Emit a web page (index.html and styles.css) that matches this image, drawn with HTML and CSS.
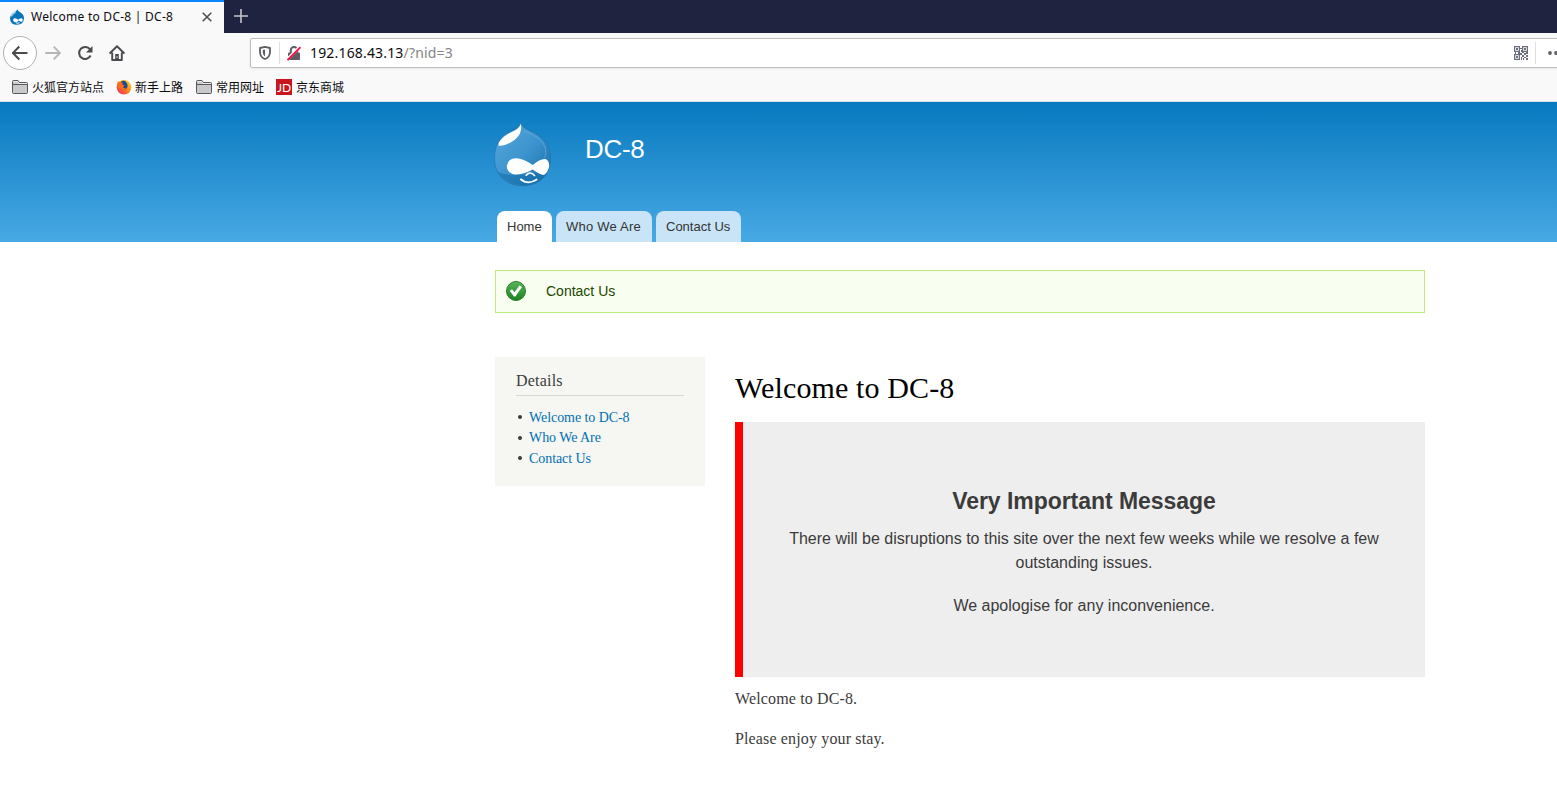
FILE: index.html
```html
<!DOCTYPE html>
<html lang="en">
<head>
<meta charset="utf-8">
<title>Welcome to DC-8 | DC-8</title>
<link rel="stylesheet" href="styles.css">
</head>
<body>
<svg width="0" height="0" class="defs">
  <defs>
    <linearGradient id="drop" x1="0" y1="0" x2="1" y2="1"><stop offset="0" stop-color="#5aa9dc"/><stop offset=".55" stop-color="#3a92cd"/><stop offset="1" stop-color="#12659f"/></linearGradient>
    <linearGradient id="green" x1="0" y1="0" x2="0" y2="1"><stop offset="0" stop-color="#58b558"/><stop offset="1" stop-color="#1c821f"/></linearGradient>
    <linearGradient id="fox" x1="1" y1="0" x2="0" y2="1"><stop offset="0" stop-color="#ffe226"/><stop offset=".45" stop-color="#ff8a16"/><stop offset="1" stop-color="#f5156c"/></linearGradient>
    <symbol id="folder" viewBox="0 0 16 14"><path d="M.5 12.5v-11q0-1 1-1H6l1.5 2h7q1 0 1 1v9q0 1-1 1h-13q-1 0-1-1z" fill="#c9c8cb" stroke="#58575b"/><path d="M1 4.5h14" stroke="#58575b"/><path d="M1.5 1.5h4L7 3.5h8" fill="none" stroke="#eee"/></symbol>
  </defs>
</svg>
<div class="tabstrip">
  <div class="tab">
    <svg class="favicon" width="16" height="16" viewBox="0 0 16 16"><path d="M8.2.3Q9 2.2 11.5 3.5 15 5.6 15 9.5 14.5 15.7 8 15.8 1.2 15.5 1 9.4 1.2 5.6 5 3.4 8 2 8.2.3z" fill="#0875b8"/><path d="M2.4 7.4Q3 4.5 6.6 3" fill="none" stroke="#a8d5ed" stroke-width="1.4"/><path d="M4.7 9.4q2.3-.7 4.4 1.4 2-2 4-1.4 1.3 1.2.2 3-1.3 1-3.4-1-2.7 2.5-4.7 1.7-2-1.8-.5-3.7z" fill="#fff"/><path d="M7 13.8q2 .9 3.6-.1" stroke="#fff" fill="none"/></svg>
    <span class="tab-title">Welcome to DC-8 | DC-8</span>
    <svg class="close" width="10" height="10" viewBox="0 0 10 10"><path d="M.7.7l8.6 8.6M9.3.7L.7 9.3" stroke="#4a4a4f" stroke-width="1.5"/></svg>
  </div>
  <svg class="plus" width="14" height="14" viewBox="0 0 14 14"><path d="M7 0v14M0 7h14" stroke="#c5c5cc" stroke-width="1.6"/></svg>
</div>
<div class="toolbar">
  <span class="back"><svg width="16" height="16" viewBox="0 0 16 16"><path d="M15.5 8H1.3M7.3 1.5L1 8l6.3 6.5" fill="none" stroke="#4a4a4f" stroke-width="2"/></svg></span>
  <svg class="forward" width="16" height="16" viewBox="0 0 16 16"><path d="M.3 8h14.2M8.7 1.7L15 8l-6.3 6.3" fill="none" stroke="#b5b5b7" stroke-width="1.9"/></svg>
  <svg class="reload" width="16" height="16" viewBox="0 0 16 16"><path d="M13 4.4A6 6 0 1 0 13.6 10.5" fill="none" stroke="#4a4a4f" stroke-width="2"/><path d="M15.5 1v6.5H9z" fill="#4a4a4f"/></svg>
  <svg class="home" width="16" height="16" viewBox="0 0 16 16"><path d="M.6 8.5L8 1.2l7.4 7.3M3.2 7.5V15h9.6V7.5" fill="none" stroke="#4a4a4f" stroke-width="1.9" stroke-linejoin="round"/><path d="M6.2 9h3.6v5.5H6.2z" fill="#4a4a4f"/><path d="M8 11v2" stroke="#ccc"/></svg>
  <div class="urlbar">
    <svg class="shield" width="12" height="14" viewBox="0 0 12 14"><path d="M6 .9l5 1.1v4.5Q10.5 11.5 6 13 1.5 11.5 1 6.5V2z" fill="none" stroke="#5c5c61" stroke-width="1.8" stroke-linejoin="round"/><path d="M6 3.5l-2.2.6v2.7Q4.2 9.6 6 10.5z" fill="#5c5c61"/></svg>
    <i class="sep"></i>
    <svg class="lock" width="14" height="15" viewBox="0 0 14 15"><path d="M3.8 7V4.3a3.2 3.2 0 0 1 6.4 0V7" fill="none" stroke="#5c5c61" stroke-width="2"/><rect x="1" y="6.5" width="12" height="7.5" rx="1" fill="#5c5c61"/><path d="M.5 13L12.9.9" stroke="#fff" stroke-width="3"/><path d="M.5 14L13.5 1.2" stroke="#f5114e" stroke-width="1.9"/></svg>
    <span class="url">192.168.43.13<span class="path">/?nid=3</span></span>
    <svg class="qr" width="14" height="14" viewBox="0 0 14 14"><g fill="none" stroke="#69707c" stroke-width="1.2"><path d="M.6.6h4.800v4.800H.6zM8.600.6h4.800v4.800H8.600zM.6 8.600h4.800v4.800H.6z"/></g><path d="M2 2h2v2H2zM10 2h2v2h-2zM2 10h2v2H2zM6 2h2v1H6zM7 4h1v2H7zM1 6h1v2H1zM4 6h2v2H4zM6 7h2v2H6zM8 6h2v1H8zM12 6h2v2h-2zM10 7h2v2h-2zM8 9h2v2H8zM12 9h2v2h-2zM10 11h2v1h-2zM7 11h1v3H7zM9 12h1v2H9zM12 12h2v2h-2z" fill="#69707c"/></svg>
    <i class="sep right"></i>
    <svg class="dots" width="10" height="4" viewBox="0 0 10 4"><circle cx="2" cy="2" r="1.9" fill="#616165"/><circle cx="8" cy="2" r="1.9" fill="#616165"/></svg>
  </div>
</div>
<div class="bookmarks">
  <span class="mark m1"><svg width="16" height="14"><use href="#folder"/></svg>火狐官方站点</span>
  <span class="mark m2"><svg width="16" height="16" viewBox="0 0 16 16"><circle cx="8" cy="8.3" r="7.3" fill="url(#fox)"/><path d="M5 2.7Q8 .8 10 3q2.500 3 1 6-2 2.500-4.500 2Q3.6 10 4 7q1.5-.8 1-4.3z" fill="#174c9c"/><path d="M1 7Q.8 3.5 3 1.8q.2 1.4 1 1.9 1.8-.6 3 .2-1 1-.6 1.8l2 .5Q8 7.7 6.800 8q.8 1.6 3.2.7-.3 2.5-3.5 2.2Q2.5 10 1 7z" fill="#ff6b1b"/></svg>新手上路</span>
  <span class="mark m3"><svg width="16" height="14"><use href="#folder"/></svg>常用网址</span>
  <span class="mark m4"><b class="jd">JD</b>京东商城</span>
</div>
<header class="header">
  <div class="brand">
    <svg class="logo" width="58" height="65" viewBox="0 0 58 65"><path d="M26.700.4C28 6 34 7.500 41 11.500 50 17 56.600 24 56.600 36 56.600 53 45 63.800 29 63.800 12 63.800.5 53 .5 36 .5 25 5 17 11 12.500 18 8.500 25.500 7 26.700.4z" fill="url(#drop)" stroke="#256fa4" stroke-width=".6"/><path d="M3 49Q9 54 29 53T56 43Q51 63 29 63.300 10 62 3 49z" fill="#176fac" opacity=".6"/><path d="M30 9Q49 15 51.500 27 52.500 35 50 36" fill="none" stroke="#79bae3" opacity=".5"/><path d="M26.700 1.500C25.500 7.500 19 9 13 12.500 7 16.500 4 20.500 4.500 23.500 8 24.500 14 22 19 19 25 15 28.500 9.500 26.700 1.500z" fill="#fff"/><path d="M12.700 44Q14 36.300 22.500 36.300 29 36.300 38.700 43 46 36.500 51.500 37 56 39 55 45.500 52.500 53 49 53 45 52 38.700 47.500 30 52.500 21 52.500 13 51 12.700 44z" fill="#fff"/><path d="M31.700 53.800Q36 48 41 54" fill="none" stroke="#fff" stroke-width="1.600"/><path d="M26.300 57Q34 63.500 43.300 57.300" fill="none" stroke="#fff" stroke-width="1.800"/></svg>
    <span class="site-name">DC-8</span>
  </div>
  <nav class="menu"><a class="active">Home</a><a class="who">Who We Are</a><a class="contact">Contact Us</a></nav>
</header>
<div class="status">
  <svg width="20" height="20" viewBox="0 0 20 20"><circle cx="10" cy="10" r="9.5" fill="url(#green)" stroke="#2d7e2d"/><path d="M3.800 10l2.200-1.800 2.500 3L13.500 4.500l2.500 1.500-6.600 9.500H8z" fill="#fff"/></svg>
  <span>Contact Us</span>
</div>
<main class="columns">
  <aside class="sidebar">
    <h2>Details</h2>
    <ul><li><a class="l1">Welcome to DC-8</a></li><li><a class="l2">Who We Are</a></li><li><a class="l3">Contact Us</a></li></ul>
  </aside>
  <section class="content">
    <h1>Welcome to DC-8</h1>
    <div class="notice">
      <h3>Very Important Message</h3>
      <p>There will be disruptions to this site over the next few weeks while we resolve a few<br>outstanding issues.</p>
      <p class="sorry">We apologise for any inconvenience.</p>
    </div>
    <p class="body b1">Welcome to DC-8.</p>
    <p class="body b2">Please enjoy your stay.</p>
  </section>
</main>
</body>
</html>
```

FILE: styles.css
```css
* { box-sizing: border-box; }
body { margin: 0; width: 1557px; height: 803px; overflow: hidden; background: #fff; color: #3b3b3b; font-family: "Liberation Sans", Arial, sans-serif; }
svg { display: block; flex: none; }
.defs { position: absolute; }
h1, h2, h3, p, ul { margin: 0; padding: 0; font-weight: normal; }

.tabstrip { display: flex; height: 33px; background: #20233f; align-items: flex-start; }
.tab { display: flex; align-items: center; width: 224px; height: 33px; padding: 0 0 1px 9px; background: #f9f9fa; border-top: 2px solid #0a84ff; color: #0c0c0d; font: 12px "Noto Sans", sans-serif; }
.tab-title { width: 170px; margin: -1px 0 0 6px; white-space: nowrap; letter-spacing: .25px; }
.close { margin-left: 1px; }
.plus { margin: 9px 0 0 10px; }

.toolbar { display: flex; height: 40px; align-items: center; background: #f9f9fa; padding-left: 3px; }
.back { display: flex; flex: none; align-items: center; justify-content: center; width: 34px; height: 34px; border: 1px solid #b1b1b1; border-radius: 50%; background: #fff; }
.forward { margin-left: 8px; }
.reload { margin-left: 16px; }
.home { margin-left: 16px; }
.urlbar { display: flex; flex: none; align-items: center; width: 1340px; height: 30px; margin-left: 125px; padding-left: 8px; border: 1px solid #bdbdbe; border-radius: 2px 0 0 2px; background: #fff; box-shadow: 0 1px 3px #0001; }
.sep { width: 1px; height: 22px; margin-left: 8px; background: #dededf; }
.lock { margin-left: 7px; }
.url { width: 1204px; flex: none; margin-left: 9px; font: 14px/20px "Noto Sans", sans-serif; color: #0c0c0d; white-space: nowrap; letter-spacing: .17px; }
.path { color: #858587; }
.sep.right { margin-left: 7px; }
.dots { margin-left: 12px; }

.bookmarks { display: flex; height: 29px; align-items: center; background: #f9f9fa; border-bottom: 1px solid #d8e2ea; padding-left: 12px; font: 12px/18px "Noto Sans CJK SC", sans-serif; color: #0c0c0d; }
.mark { display: flex; align-items: center; gap: 4px; height: 18px; white-space: nowrap; }
.m1 { width: 104px; }
.m2 { width: 80px; gap: 3px; }
.m3 { width: 80px; }
.jd { width: 16px; height: 16px; background: #c9151e; color: #fff; font: 12px/17px Lato, sans-serif; text-align: center; }

.header { height: 140px; padding-left: 494px; background: linear-gradient(#0779bf, #48a9e4); }
.brand { display: flex; align-items: flex-start; height: 109px; padding-top: 20px; }
.site-name { margin: 12px 0 0 33px; color: #fff; font-size: 26px; line-height: 30px; letter-spacing: -.3px; }
.menu { display: flex; gap: 4px; padding-left: 3px; }
.menu a { width: 85px; height: 31px; padding-left: 10px; border-radius: 8px 8px 0 0; background: #c8e4f6; font-size: 13px; line-height: 31px; color: #333; }
.menu .active { width: 55px; background: #fff; }
.menu .who { width: 96px; letter-spacing: .22px; }

.status { display: flex; align-items: center; width: 930px; height: 43px; margin: 28px 0 0 495px; padding: 0 0 1px 10px; border: 1px solid #be7; background: #f8fff0; color: #234600; font-size: 14px; }
.status span { margin-left: 20px; }

.columns { display: flex; gap: 30px; margin: 44px 0 0 495px; font-family: Georgia, "Liberation Serif", serif; }
.sidebar { width: 210px; height: 129px; padding: 13px 21px 0; background: #f6f6f2; }
.sidebar h2 { height: 26px; border-bottom: 1px solid #d6d6d6; font-size: 16px; line-height: 22px; letter-spacing: .2px; }
.sidebar ul { margin-top: 11px; list-style: none; }
.sidebar li { display: flex; align-items: center; height: 20.5px; font-size: 14px; line-height: 20px; color: #0071b3; white-space: nowrap; letter-spacing: -.07px; }
.sidebar li::before { content: ""; width: 4px; height: 4px; margin: 0 7px 0 2px; border-radius: 50%; background: #3b3b3b; }
.l1, .l3 { padding-top: 1px; }
.content { width: 690px; }
.content h1 { height: 65px; padding-top: 13px; font-size: 30px; line-height: 36px; color: #000; letter-spacing: .13px; }
.notice { height: 255px; padding-top: 64px; border-left: 8px solid #f00; background: #eee; font: 16px/24px "Liberation Sans", Arial, sans-serif; text-align: center; }
.notice h3 { font-size: 23px; line-height: 30px; font-weight: bold; margin-bottom: 11px; letter-spacing: -.04px; }
.notice .sorry { margin-top: 19px; }
.body { font-size: 16px; line-height: 24px; letter-spacing: .14px; }
.b1 { margin-top: 10px; }
.b2 { margin-top: 16px; }
```
